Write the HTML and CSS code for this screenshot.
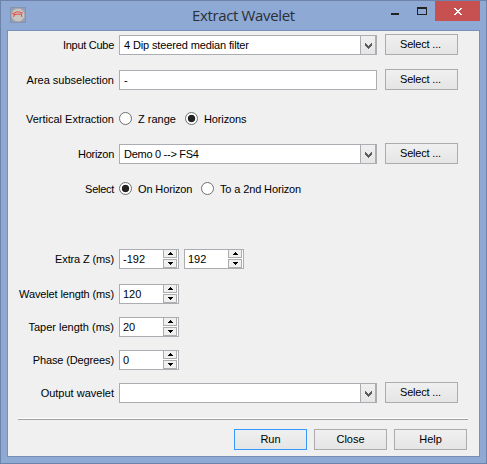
FILE: index.html
```
<!DOCTYPE html>
<html lang="en">
<head>
<meta charset="utf-8">
<title>Extract Wavelet</title>
<link rel="stylesheet" href="styles.css">
</head>
<body>
<svg width="0" height="0" class="defs">
  <symbol id="chevron" viewBox="0 0 7 6"><path d="M0 0h1v1h1v1h1v1h1v-1h1v-1h1v-1h1v3h-1v1h-1v1h-1v1h-1v-1h-1v-1h-1v-1h-1z" fill="#5c5c5c"/></symbol>
  <symbol id="up" viewBox="0 0 5 3"><path d="M2 0h1v1h1v1h1v1h-5v-1h1v-1h1z" fill="#000"/></symbol>
  <symbol id="down" viewBox="0 0 5 3"><path d="M0 0h5v1h-1v1h-1v1h-1v-1h-1v-1h-1z" fill="#000"/></symbol>
</svg>
<div class="window">
  <header class="titlebar">
    <svg class="logo" width="16" height="16" viewBox="0 0 16 16">
      <rect x=".5" y=".5" width="15" height="15" fill="#919fba" stroke="#8493b2"/>
      <circle cx="8" cy="8" r="6.8" fill="#c9c5c1" stroke="#aaa7a7"/>
      <path d="M2 7l3-1.5 2-.7 3 .4 3 1M3 8l4-.8h5M5 6.5L3.5 10M11 7l1 3" fill="none" stroke="#e34d4d"/>
    </svg>
    <h1 class="title">Extract Wavelet</h1>
    <div class="controls">
      <svg class="minimize" width="8" height="2"><rect width="8" height="2" fill="#222"/></svg>
      <svg class="maximize" width="10" height="8"><path d="M0 0h10v8H0zM1 2v5h8V2z" fill="#222" fill-rule="evenodd"/></svg>
      <div class="close"><svg width="8" height="7" viewBox="0 0 8 7"><path d="M0 0h2v1h1v1h2v-1h1v-1h2v1h-1v1h-1v1h-1v1h1v1h1v1h1v1h-2v-1h-1v-1h-2v1h-1v1h-2v-1h1v-1h1v-1h1v-1h-1v-1h-1v-1h-1z" fill="#fff"/></svg></div>
    </div>
  </header>
  <main class="client">
    <div class="row"><span class="label tighter">Input Cube</span><div class="field combo"><span class="tight">4 Dip steered median filter</span><i class="drop"><svg width="7" height="6"><use href="#chevron"/></svg></i></div><div class="button tight">Select ...</div></div>
    <div class="row gap-l"><span class="label">Area subselection</span><div class="field">-</div><div class="button tight">Select ...</div></div>
    <div class="row gap-xl"><span class="label">Vertical Extraction</span><i class="radio"></i><span class="option z-range">Z range</span><i class="radio on"></i><span class="option tight">Horizons</span></div>
    <div class="row gap-l"><span class="label tighter">Horizon</span><div class="field combo"><span class="tighter">Demo 0 --&gt; FS4</span><i class="drop"><svg width="7" height="6"><use href="#chevron"/></svg></i></div><div class="button tight">Select ...</div></div>
    <div class="row gap-l"><span class="label tighter">Select</span><i class="radio on"></i><span class="option on-horizon tight">On Horizon</span><i class="radio"></i><span class="option tight">To a 2nd Horizon</span></div>
    <div class="row gap-section"><span class="label tight">Extra Z (ms)</span><div class="field spin"><span>-192</span><i class="steps"><b><svg width="5" height="3"><use href="#up"/></svg></b><b><svg width="5" height="3"><use href="#down"/></svg></b></i></div><div class="field spin second"><span>192</span><i class="steps"><b><svg width="5" height="3"><use href="#up"/></svg></b><b><svg width="5" height="3"><use href="#down"/></svg></b></i></div></div>
    <div class="row gap-l"><span class="label tight">Wavelet length (ms)</span><div class="field spin"><span>120</span><i class="steps"><b><svg width="5" height="3"><use href="#up"/></svg></b><b><svg width="5" height="3"><use href="#down"/></svg></b></i></div></div>
    <div class="row gap-m"><span class="label">Taper length (ms)</span><div class="field spin"><span>20</span><i class="steps"><b><svg width="5" height="3"><use href="#up"/></svg></b><b><svg width="5" height="3"><use href="#down"/></svg></b></i></div></div>
    <div class="row gap-m"><span class="label tight">Phase (Degrees)</span><div class="field spin"><span>0</span><i class="steps"><b><svg width="5" height="3"><use href="#up"/></svg></b><b><svg width="5" height="3"><use href="#down"/></svg></b></i></div></div>
    <div class="row gap-m"><span class="label">Output wavelet</span><div class="field combo"><span></span><i class="drop"><svg width="7" height="6"><use href="#chevron"/></svg></i></div><div class="button tight">Select ...</div></div>
    <div class="separator"></div>
    <footer class="actions"><div class="button primary">Run</div><div class="button">Close</div><div class="button">Help</div></footer>
  </main>
</div>
</body>
</html>
```
FILE: styles.css
```
* { box-sizing: border-box; }
body { margin: 0; font: 11px/13px "Liberation Sans", Arial, sans-serif; color: #000; }
svg { display: block; flex: none; }
.defs { display: none; }
.window { width: 487px; height: 464px; border: 1px solid #6d83a9; background: #8da9d4; padding: 0 6px 6px; display: flex; flex-direction: column; }
.titlebar { height: 29px; flex: none; display: flex; align-items: flex-start; }
.logo { margin: 6px 0 0 3px; }
.title { flex: 1; margin: 3px 0 0 166px; font: 15px/22px "Open Sans", "Noto Sans", sans-serif; letter-spacing: -.36px; color: #2b2f36; white-space: nowrap; }
.controls { display: flex; }
.minimize { margin: 12px 18px 0 0; }
.maximize { margin: 6px 8px 0 0; }
.close { width: 45px; height: 20px; background: #c75050; display: flex; align-items: center; justify-content: center; }
.client { flex: 1; border: 1px solid #7690b8; background: #f0f0f0; padding: 3px 10px 0; }
.row { display: flex; align-items: center; height: 21px; white-space: nowrap; }
.gap-m { margin-top: 12px; }
.gap-l { margin-top: 14px; }
.gap-xl { margin-top: 18px; }
.gap-section { margin-top: 49px; }
.label { width: 96px; margin-right: 5px; padding-top: 2px; flex: none; display: flex; justify-content: flex-end; }
.tight { letter-spacing: -.13px; }
.tighter { letter-spacing: -.28px; }
.button.tight { letter-spacing: -.18px; }
.field { width: 258px; height: 20px; margin-top: 1px; flex: none; border: 1px solid #abadb3; background: #fff; padding-left: 4px; display: flex; align-items: center; }
.combo { justify-content: space-between; padding: 0; }
.combo span { padding-left: 4px; }
.drop { width: 17px; height: 20px; margin-right: -1px; border: 1px solid #abadb3; border-right-width: 2px; background: linear-gradient(#f0f0f0, #e5e5e5); display: flex; align-items: center; justify-content: center; padding-top: 1px; }
.button { width: 73px; height: 21px; flex: none; border: 1px solid #acacac; background: linear-gradient(#f0f0f0, #e5e5e5); display: flex; align-items: center; justify-content: center; padding-bottom: 1px; }
.row .button { margin-left: 8px; padding-right: 2px; }
.radio { width: 13px; height: 13px; flex: none; border: 1px solid #707070; border-radius: 50%; background: #fff; }
.radio.on { background: radial-gradient(circle, #222 0 3.4px, #fff 4.1px); }
.option { margin-left: 6px; padding-top: 2px; }
.z-range { width: 47px; }
.on-horizon { width: 63px; }
.spin { width: 60px; padding-left: 3px; justify-content: space-between; }
.second { margin-left: 5px; }
.steps { width: 14px; height: 18px; margin-right: 1px; display: flex; flex-direction: column; gap: 1px; }
.steps b { height: 8px; border: 1px solid #acacac; border-top: 0; background: #f0f0f0; display: flex; align-items: center; justify-content: center; }
.steps b + b { height: 9px; border-top: 1px solid #acacac; }
.separator { height: 2px; width: 450px; margin-top: 15px; border-top: 1px solid #fff; border-bottom: 1px solid #a0a0a0; }
.actions { display: flex; justify-content: flex-end; gap: 7px; margin: 9px 2px 0 0; }
.primary { border-color: #3399ff; }
```
